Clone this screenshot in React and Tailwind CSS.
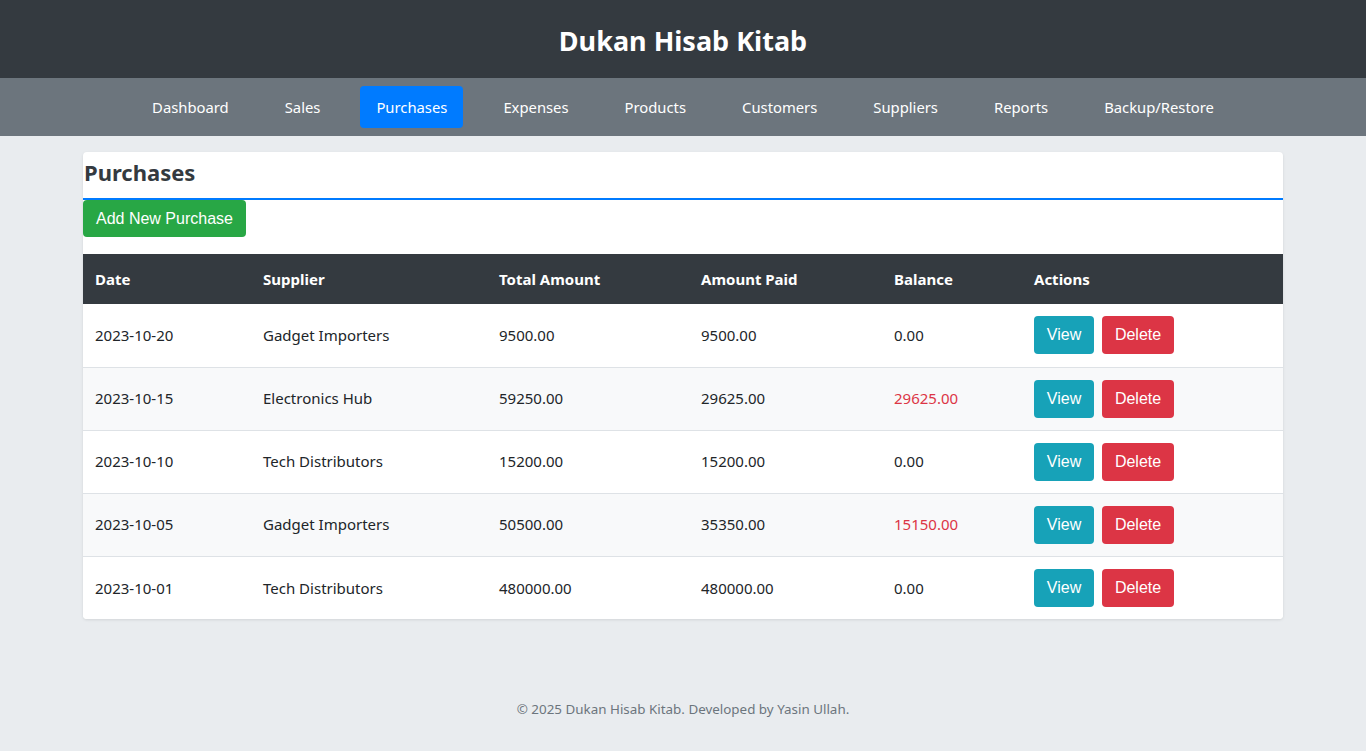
import React from "react";

const navItems = ["Dashboard", "Sales", "Purchases", "Expenses", "Products", "Customers", "Suppliers", "Reports", "Backup/Restore"];

const purchases = [
    { date: "2023-10-20", supplier: "Gadget Importers", total: "9500.00", paid: "9500.00", balance: "0.00" },
    { date: "2023-10-15", supplier: "Electronics Hub", total: "59250.00", paid: "29625.00", balance: "29625.00" },
    { date: "2023-10-10", supplier: "Tech Distributors", total: "15200.00", paid: "15200.00", balance: "0.00" },
    { date: "2023-10-05", supplier: "Gadget Importers", total: "50500.00", paid: "35350.00", balance: "15150.00" },
    { date: "2023-10-01", supplier: "Tech Distributors", total: "480000.00", paid: "480000.00", balance: "0.00" },
];

const btnFont = { fontFamily: '"Liberation Sans", Arial, sans-serif' };

const App = () => {
    return (
        <div className="min-h-[751px] bg-[#e9ecef] flex flex-col font-['Noto_Sans',sans-serif] text-[#212529]">
            {/* header */}
            <header className="h-[78px] bg-[#343a40] flex items-center justify-center">
                <h1 className="text-[27px] font-bold text-white leading-none pt-[2px]">Dukan Hisab Kitab</h1>
            </header>

            {/* nav */}
            <nav className="h-[58px] bg-[#6c757d] flex items-center justify-center gap-6">
                {navItems.map((item) => (
                    <a
                        key={item}
                        href="#"
                        className={
                            "h-[42px] px-4 flex items-center rounded text-[14.8px] text-white " +
                            (item === "Purchases" ? "bg-[#007bff]" : "")
                        }
                    >
                        {item}
                    </a>
                ))}
            </nav>

            {/* main card */}
            <main className="w-[1200px] mx-auto mt-4 bg-white rounded shadow-[0_1px_3px_rgba(0,0,0,0.1)] overflow-hidden">
                <h2 className="pt-[4px] pb-[10px] text-[22px] leading-8 font-bold text-[#343a40] border-b-2 border-[#007bff] pl-px">
                    Purchases
                </h2>
                <button
                    style={btnFont}
                    className="h-[37px] px-[13px] bg-[#28a745] text-white text-[16px] rounded mb-[17px]"
                >
                    Add New Purchase
                </button>

                <table className="w-full text-[15px] border-collapse">
                    <thead>
                        <tr className="h-[50px] bg-[#343a40] text-white text-left">
                            <th className="w-[168px] px-3 font-bold">Date</th>
                            <th className="w-[236px] px-3 font-bold">Supplier</th>
                            <th className="w-[202px] px-3 font-bold">Total Amount</th>
                            <th className="w-[193px] px-3 font-bold">Amount Paid</th>
                            <th className="w-[140px] px-3 font-bold">Balance</th>
                            <th className="px-3 font-bold">Actions</th>
                        </tr>
                    </thead>
                    <tbody>
                        {purchases.map((p, i) => (
                            <tr
                                key={i}
                                className={
                                    "h-[63px] " +
                                    (i < purchases.length - 1 ? "border-b border-[#dee2e6] " : "") +
                                    (i % 2 === 1 ? "bg-[#f8f9fa]" : "bg-white")
                                }
                            >
                                <td className="px-3">{p.date}</td>
                                <td className="px-3">{p.supplier}</td>
                                <td className="px-3">{p.total}</td>
                                <td className="px-3">{p.paid}</td>
                                <td className={"px-3 " + (p.balance !== "0.00" ? "text-[#dc3545]" : "")}>{p.balance}</td>
                                <td className="px-3">
                                    <div className="flex gap-2">
                                        <button
                                            style={btnFont}
                                            className="w-[60px] h-[38px] bg-[#17a2b8] text-white text-[16px] rounded"
                                        >
                                            View
                                        </button>
                                        <button
                                            style={btnFont}
                                            className="w-[72px] h-[38px] bg-[#dc3545] text-white text-[16px] rounded"
                                        >
                                            Delete
                                        </button>
                                    </div>
                                </td>
                            </tr>
                        ))}
                    </tbody>
                </table>
            </main>

            {/* footer */}
            <footer className="mt-[80px] text-center text-[13.4px] text-[#6c757d]">
                © 2025 Dukan Hisab Kitab. Developed by Yasin Ullah.
            </footer>
        </div>
    );
};

export default App;
